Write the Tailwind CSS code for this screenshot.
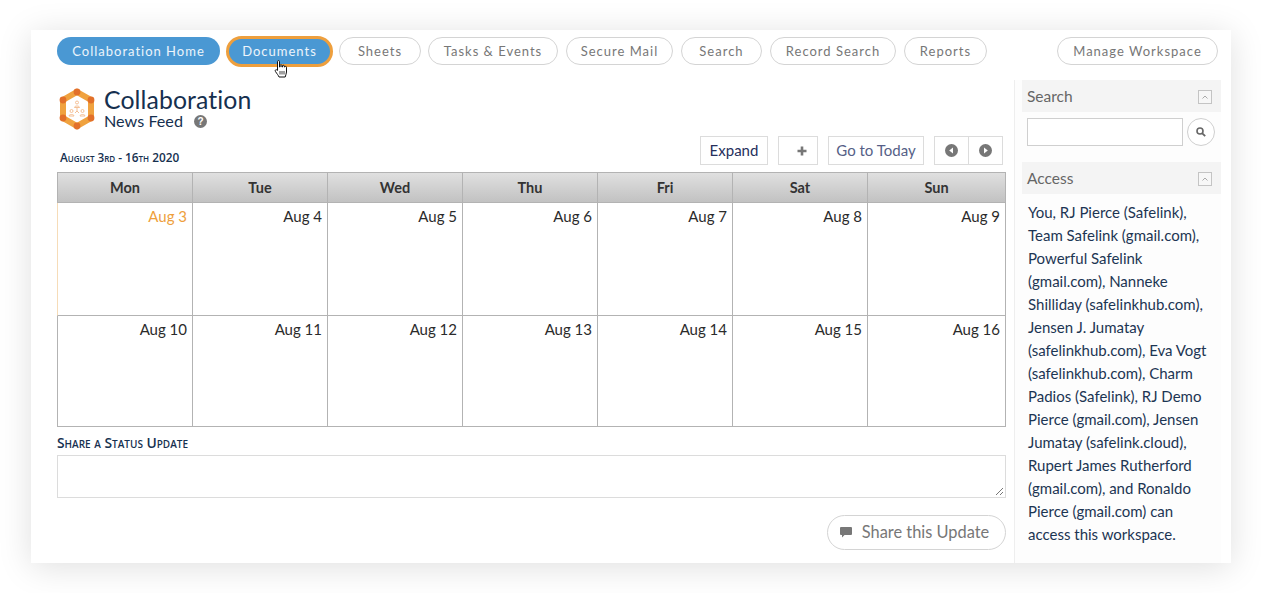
<!DOCTYPE html>
<html lang="en">
<head>
  <meta charset="UTF-8" />
  <title>Collaboration</title>
  <script src="https://cdn.jsdelivr.net/npm/@tailwindcss/browser@4"></script>
</head>
<body class="bg-white h-[593px] overflow-hidden font-['Lato','Open_Sans',sans-serif]">
  <div class="relative ml-[31px] mt-[30px] w-[1200px] h-[533px] bg-white shadow-[0_4px_32px_rgba(0,0,0,0.13)] flex flex-col">
    <!-- nav -->
    <nav class="flex items-center h-[28px] mt-[7px] pl-[26px] text-[13px] tracking-[1px] text-[#777]">
      <a class="w-[163px] h-[28px] pt-[1px] flex items-center justify-center rounded-full bg-[#4a98d3] text-white/90">Collaboration Home</a>
      <a class="ml-[6px] w-[107px] h-[31px] pt-[1px] flex items-center justify-center rounded-full bg-[#4a98d3] border-[3px] border-[#ee9f3d] text-white/90">Documents</a>
      <a class="ml-[6px] w-[82px] h-[28px] pt-[1px] flex items-center justify-center rounded-full border border-[#d4d4d4]">Sheets</a>
      <a class="ml-[7px] w-[130px] h-[28px] pt-[1px] flex items-center justify-center rounded-full border border-[#d4d4d4]">Tasks &amp; Events</a>
      <a class="ml-[8px] w-[107px] h-[28px] pt-[1px] flex items-center justify-center rounded-full border border-[#d4d4d4]">Secure Mail</a>
      <a class="ml-[8px] w-[81px] h-[28px] pt-[1px] flex items-center justify-center rounded-full border border-[#d4d4d4]">Search</a>
      <a class="ml-[8px] w-[126px] h-[28px] pt-[1px] flex items-center justify-center rounded-full border border-[#d4d4d4]">Record Search</a>
      <a class="ml-[8px] w-[83px] h-[28px] pt-[1px] flex items-center justify-center rounded-full border border-[#d4d4d4]">Reports</a>
      <a class="ml-[70px] w-[161px] h-[28px] pt-[1px] flex items-center justify-center rounded-full border border-[#d4d4d4]">Manage Workspace</a>
    </nav>

    <div class="flex mt-[15px] flex-1">
      <!-- main column -->
      <main class="w-[983px] pl-[26px] pr-[8px]">
        <div class="flex items-start mt-[8px] h-[42px]">
          <svg class="w-[40px] h-[42px]" viewBox="0 0 40 42">
            <polygon points="20,4 34,12 34,30 20,38 6,30 6,12" fill="none" stroke="#f0a23f" stroke-width="6"/>
            <circle cx="20" cy="4" r="3.4" fill="#e2702a"/><circle cx="34" cy="12" r="3.4" fill="#e2702a"/>
            <circle cx="34" cy="30" r="3.4" fill="#e2702a"/><circle cx="20" cy="38" r="3.4" fill="#e2702a"/>
            <circle cx="6" cy="30" r="3.4" fill="#e2702a"/><circle cx="6" cy="12" r="3.4" fill="#e2702a"/>
            <g fill="none" stroke="#f3b98a" stroke-width="0.9">
              <circle cx="20" cy="14.5" r="1.5"/><path d="M17.5 19.5c0-2 5-2 5 0z"/>
              <circle cx="14.5" cy="23" r="1.5"/><path d="M12 28c0-2 5-2 5 0z"/>
              <circle cx="25.5" cy="23" r="1.5"/><path d="M23 28c0-2 5-2 5 0z"/>
              <path d="M20 20v3l-2 2M20 23l2 2"/>
            </g>
          </svg>
          <div class="ml-[7px] text-[#16304f]">
            <div class="text-[24.8px] leading-[24px] tracking-[0.1px]">Collaboration</div>
            <div class="flex items-center text-[16.2px] leading-[18px]">News Feed
              <svg class="ml-[11px] w-[13px] h-[13px]" viewBox="0 0 13 13"><circle cx="6.5" cy="6.5" r="6.5" fill="#777"/><text x="6.5" y="10" text-anchor="middle" font-size="10" font-weight="700" fill="#fff" font-family="Liberation Sans">?</text></svg>
            </div>
          </div>
        </div>

        <div class="flex items-center h-[29px] mt-[6px] text-[15px]">
          <div class="self-end ml-[3px] mr-auto text-[11.8px] font-semibold leading-[16px] text-[#16304f] font-['Open_Sans',sans-serif] [font-variant:small-caps]">August 3rd - 16th 2020</div>
          <div class="w-[68px] h-[29px] pb-[1px] flex items-center justify-center border border-[#dcdcdc] text-[#26305c]">Expand</div>
          <div class="ml-[10px] w-[40px] h-[29px] flex items-center justify-center border border-[#dcdcdc] text-[#777]">
            <svg class="ml-[8px] w-[10px] h-[10px]" viewBox="0 0 10 10"><path d="M5 .5v9M.5 5h9" stroke="#777" stroke-width="2.6"/></svg>
          </div>
          <div class="ml-[10px] w-[96px] h-[29px] pb-[1px] flex items-center justify-center border border-[#dcdcdc] text-[#565f87]">Go to Today</div>
          <div class="ml-[10px] mr-[3px] w-[69px] h-[29px] flex border border-[#dcdcdc]">
            <div class="w-[34px] flex items-center justify-center border-r border-[#dcdcdc]">
              <svg class="w-[13px] h-[13px]" viewBox="0 0 13 13"><circle cx="6.5" cy="6.5" r="6.5" fill="#777"/><path d="M8 3.5v6L4.2 6.5z" fill="#fff"/></svg>
            </div>
            <div class="flex-1 flex items-center justify-center">
              <svg class="w-[13px] h-[13px]" viewBox="0 0 13 13"><circle cx="6.5" cy="6.5" r="6.5" fill="#777"/><path d="M5 3.5v6l3.8-3z" fill="#fff"/></svg>
            </div>
          </div>
        </div>

        <!-- calendar -->
        <div class="mt-[7px] w-[949px] h-[255px] border border-[#b3b3b3] grid grid-cols-[135px_135px_135px_135px_135px_135px_1fr] grid-rows-[30px_113px_1fr] text-[15px] text-[#2b2b2b]">
          <div class="flex items-center justify-center font-bold text-[14.5px] text-[#333] bg-gradient-to-b from-[#e0e0e0] to-[#c2c2c2] border-b border-r border-[#b3b3b3]">Mon</div>
          <div class="flex items-center justify-center font-bold text-[14.5px] text-[#333] bg-gradient-to-b from-[#e0e0e0] to-[#c2c2c2] border-b border-r border-[#b3b3b3]">Tue</div>
          <div class="flex items-center justify-center font-bold text-[14.5px] text-[#333] bg-gradient-to-b from-[#e0e0e0] to-[#c2c2c2] border-b border-r border-[#b3b3b3]">Wed</div>
          <div class="flex items-center justify-center font-bold text-[14.5px] text-[#333] bg-gradient-to-b from-[#e0e0e0] to-[#c2c2c2] border-b border-r border-[#b3b3b3]">Thu</div>
          <div class="flex items-center justify-center font-bold text-[14.5px] text-[#333] bg-gradient-to-b from-[#e0e0e0] to-[#c2c2c2] border-b border-r border-[#b3b3b3]">Fri</div>
          <div class="flex items-center justify-center font-bold text-[14.5px] text-[#333] bg-gradient-to-b from-[#e0e0e0] to-[#c2c2c2] border-b border-r border-[#b3b3b3]">Sat</div>
          <div class="flex items-center justify-center font-bold text-[14.5px] text-[#333] bg-gradient-to-b from-[#e0e0e0] to-[#c2c2c2] border-b border-[#b3b3b3]">Sun</div>

          <div class="-ml-[1px] text-right pr-[5px] pt-[2px] border-l border-l-[#f6dcb8] border-b border-r border-[#b3b3b3] text-[#ee9f3d]">Aug 3</div>
          <div class="text-right pr-[5px] pt-[2px] border-b border-r border-[#b3b3b3]">Aug 4</div>
          <div class="text-right pr-[5px] pt-[2px] border-b border-r border-[#b3b3b3]">Aug 5</div>
          <div class="text-right pr-[5px] pt-[2px] border-b border-r border-[#b3b3b3]">Aug 6</div>
          <div class="text-right pr-[5px] pt-[2px] border-b border-r border-[#b3b3b3]">Aug 7</div>
          <div class="text-right pr-[5px] pt-[2px] border-b border-r border-[#b3b3b3]">Aug 8</div>
          <div class="text-right pr-[5px] pt-[2px] border-b border-[#b3b3b3]">Aug 9</div>

          <div class="text-right pr-[5px] pt-[2px] border-r border-[#b3b3b3]">Aug 10</div>
          <div class="text-right pr-[5px] pt-[2px] border-r border-[#b3b3b3]">Aug 11</div>
          <div class="text-right pr-[5px] pt-[2px] border-r border-[#b3b3b3]">Aug 12</div>
          <div class="text-right pr-[5px] pt-[2px] border-r border-[#b3b3b3]">Aug 13</div>
          <div class="text-right pr-[5px] pt-[2px] border-r border-[#b3b3b3]">Aug 14</div>
          <div class="text-right pr-[5px] pt-[2px] border-r border-[#b3b3b3]">Aug 15</div>
          <div class="text-right pr-[5px] pt-[2px]">Aug 16</div>
        </div>

        <div class="mt-[8px] h-[20px] leading-[16px] text-[13.8px] font-semibold text-[#16304f] font-['Open_Sans',sans-serif] [font-variant:small-caps]">Share a Status Update</div>
        <div class="relative w-[949px] h-[43px] border border-[#dcdcdc]">
          <svg class="absolute right-[1px] bottom-[1px] w-[9px] h-[9px]" viewBox="0 0 9 9"><path d="M1 8l7-7M5 8l3-3" stroke="#777" stroke-width="1"/></svg>
        </div>
        <div class="flex justify-end mt-[17px] w-[949px]">
          <div class="w-[179px] h-[35px] pr-[4px] flex items-center justify-center rounded-full border border-[#d4d4d4] text-[16.4px] text-[#777]">
            <svg class="w-[12px] h-[11px] mr-[10px]" viewBox="0 0 12 11"><path d="M1 0h10a1 1 0 0 1 1 1v6a1 1 0 0 1-1 1H4.5L2 10.5V8H1a1 1 0 0 1-1-1V1a1 1 0 0 1 1-1z" fill="#777"/></svg>
            Share this Update
          </div>
        </div>
      </main>

      <!-- sidebar -->
      <aside class="w-[207px] border-l border-[#eeeeee] bg-[#fdfdfd] pl-[7px]">
        <div class="h-[32px] pt-[2px] bg-[#f4f4f4] flex items-center justify-between pl-[5px] pr-[9px] text-[15.5px] text-[#666]">Search
          <svg class="w-[14px] h-[14px]" viewBox="0 0 14 14"><rect x=".5" y=".5" width="13" height="13" fill="#f7f7f7" stroke="#c4c4c4"/><path d="M4.5 8.5L7 6l2.5 2.5" fill="none" stroke="#aaa"/></svg>
        </div>
        <div class="flex mt-[6px] pl-[5px]">
          <div class="w-[156px] h-[28px] bg-white border border-[#cfcfcf]"></div>
          <div class="ml-[4px] w-[28px] h-[28px] rounded-full bg-white border border-[#cfcfcf] flex items-center justify-center">
            <svg class="w-[10px] h-[10px]" viewBox="0 0 10 10"><circle cx="4" cy="4" r="3" fill="none" stroke="#666" stroke-width="1.6"/><path d="M6.3 6.3L9.2 9.2" stroke="#666" stroke-width="1.8"/></svg>
          </div>
        </div>
        <div class="mt-[16px] h-[32px] pt-[2px] bg-[#f4f4f4] flex items-center justify-between pl-[5px] pr-[9px] text-[15.5px] text-[#666]">Access
          <svg class="w-[14px] h-[14px]" viewBox="0 0 14 14"><rect x=".5" y=".5" width="13" height="13" fill="#f7f7f7" stroke="#c4c4c4"/><path d="M4.5 8.5L7 6l2.5 2.5" fill="none" stroke="#aaa"/></svg>
        </div>
        <p class="mt-[7px] pl-[6px] text-[15px] leading-[23px] text-[#1c3553] whitespace-nowrap">You, RJ Pierce (Safelink),<br>Team Safelink (gmail.com),<br>Powerful Safelink<br>(gmail.com), Nanneke<br>Shilliday (safelinkhub.com),<br>Jensen J. Jumatay<br>(safelinkhub.com), Eva Vogt<br>(safelinkhub.com), Charm<br>Padios (Safelink), RJ Demo<br>Pierce (gmail.com), Jensen<br>Jumatay (safelink.cloud),<br>Rupert James Rutherford<br>(gmail.com), and Ronaldo<br>Pierce (gmail.com) can<br>access this workspace.</p>
      </aside>
    </div>

    <!-- mouse cursor over Documents -->
    <svg class="absolute left-[243px] top-[30px] w-[14px] h-[18px]" viewBox="0 0 14 18">
      <path d="M3.5 1.5c0-1.2 2-1.2 2 0V7h.6V5.5c0-1 1.8-1 1.8 0V7h.6V6c0-1 1.8-1 1.8 0v1h.5c0-.8 1.7-.8 1.7.2V12c0 2-1 3-1.3 5H5c-.5-1.6-2-3-3.6-5.6-.8-1.4.8-2.4 2.1-1z" fill="#fff" stroke="#111" stroke-width="1"/>
      <path d="M6 11v3.5M8 11v3.5M10 11v3.5" stroke="#111" stroke-width=".8"/>
    </svg>
  </div>
</body>
</html>
